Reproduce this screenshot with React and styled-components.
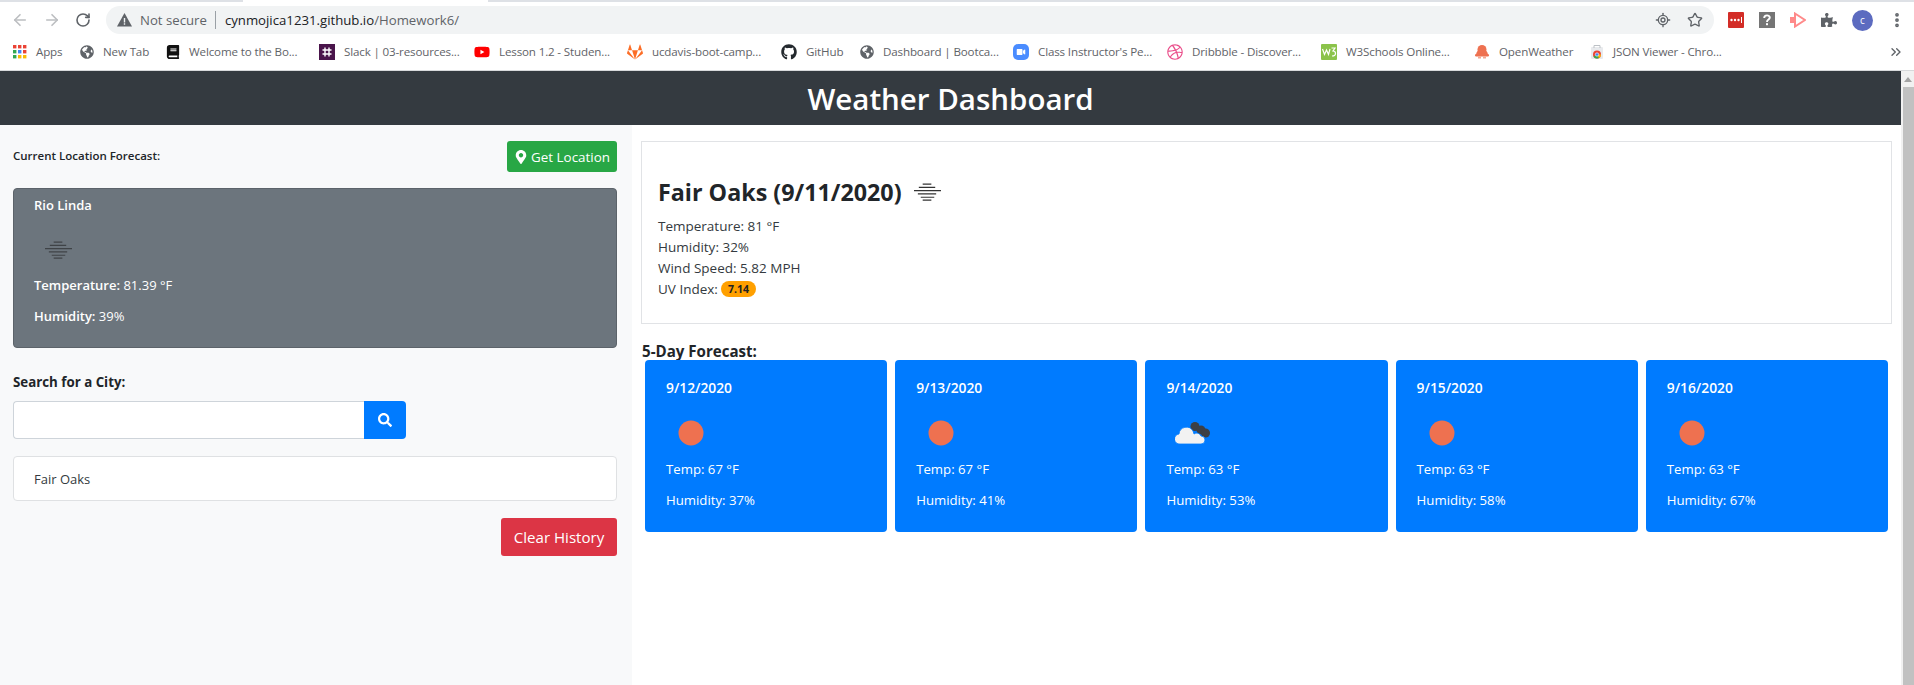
import React from "react";
import styled, { createGlobalStyle } from "styled-components";
import { FaMapMarkerAlt, FaSearch, FaGithub, FaGitlab, FaYoutube, FaGlobeAmericas, FaBook, FaDribbble, FaPuzzlePiece, FaVideo } from "react-icons/fa";
import { ArrowLeft, ArrowRight, RotateCw, Star, EllipsisVertical, ChevronsRight, LocateFixed } from "lucide-react";

const UI_FONT = `"Open Sans", "Noto Sans", sans-serif`;

const GlobalStyle = createGlobalStyle`
  html, body {
    margin: 0;
    height: 685px;
    overflow: hidden;
    background: #fff;
    font-family: ${UI_FONT};
    color: #212529;
  }
  * { box-sizing: border-box; }
`;

const Browser = styled.div`
  width: 1914px;
  height: 685px;
  display: flex;
  flex-direction: column;
  overflow: hidden;
`;

const TabEdge = styled.div`
  height: 2px;
  background: linear-gradient(to right, #dee1e6 243px, #fff 243px, #fff 488px, #dee1e6 488px);
`;

const Toolbar = styled.div`
  height: 32px;
  display: flex;
  align-items: flex-start;
  padding: 4px 0 0 11px;
`;

const NavIcon = styled.span`
  width: 32px;
  height: 28px;
  display: flex;
  align-items: center;
  justify-content: flex-start;
  color: ${(p) => (p.$off ? "#bcbec1" : "#5f6368")};
`;

const Omnibox = styled.div`
  width: 1608px;
  height: 28px;
  margin-left: -1px;
  border-radius: 14px;
  background: #f1f3f4;
  display: flex;
  align-items: center;
  padding: 0 11px 0 11px;
  font-size: 13.2px;
`;

const NotSecure = styled.span`
  display: flex;
  align-items: center;
  gap: 8px;
  color: #5f6368;
  padding-right: 8px;
  border-right: 1px solid #9aa0a6;
  line-height: 18px;
`;

const Url = styled.span`
  margin-left: 9px;
  color: #202124;
  flex: 1;
  i { font-style: normal; color: #5f6368; }
`;

const OmniIcons = styled.span`
  display: flex;
  align-items: center;
  gap: 16px;
  color: #5f6368;
`;

const Extensions = styled.div`
  display: flex;
  align-items: center;
  margin-left: 14px;
  height: 28px;
  gap: 15px;
  color: #5f6368;
`;

const Avatar = styled.span`
  width: 21px;
  height: 21px;
  border-radius: 50%;
  background: #5c6bc0;
  color: #fff;
  font-size: 10px;
  display: flex;
  align-items: center;
  justify-content: center;
`;

const Bookmarks = styled.div`
  height: 37px;
  display: flex;
  align-items: center;
  padding: 0 10px 1px 13px;
  border-bottom: 1px solid #d7d9db;
  font-size: 11.6px;
  letter-spacing: -0.15px;
  color: #5f6368;
`;

const Bookmark = styled.span`
  display: flex;
  align-items: center;
  gap: 9px;
  width: ${(p) => p.$w}px;
  flex: none;
  white-space: nowrap;
`;

const More = styled.span`
  margin-left: auto;
  display: flex;
  color: #5f6368;
`;

const Viewport = styled.div`
  flex: 1;
  display: flex;
  min-height: 0;
`;

const Page = styled.div`
  flex: 1;
  display: flex;
  flex-direction: column;
  min-width: 0;
`;

const Header = styled.header`
  height: 54px;
  flex: none;
  background: #343a40;
  color: #fff;
  font-size: 29.5px;
  font-weight: 600;
  display: flex;
  align-items: center;
  justify-content: center;
`;

const Columns = styled.div`
  flex: 1;
  display: flex;
  min-height: 0;
`;

const Sidebar = styled.aside`
  width: 632px;
  flex: none;
  background: #f8f9fa;
  padding: 16px 15px 0 13px;
  font-size: 13px;
`;

const LocationRow = styled.div`
  display: flex;
  align-items: center;
  justify-content: space-between;
  height: 31px;
`;

const SmallLabel = styled.span`
  font-size: 11.5px;
  font-weight: 600;
  margin-top: -2px;
`;

const Button = styled.button`
  border: 0;
  border-radius: 3px;
  color: #fff;
  font-family: inherit;
  font-size: ${(p) => p.$size || 13.4}px;
  background: ${(p) => p.$bg};
  display: flex;
  align-items: center;
  justify-content: center;
  gap: 3px;
  padding: 0;
  width: ${(p) => p.$w}px;
  height: ${(p) => p.$h}px;
`;

const RightAlign = styled.div`
  display: flex;
  justify-content: flex-end;
  margin-top: 17px;
`;

const CurrentCard = styled.section`
  height: 160px;
  margin-top: 16px;
  border: 1px solid #5c636a;
  border-radius: 4px;
  background: #6c757d;
  color: #fff;
  padding: 6px 20px;
  line-height: 20px;
`;

const CityName = styled.div`
  font-weight: 600;
`;

const CardIcon = styled.div`
  height: ${(p) => p.$h}px;
  margin-top: ${(p) => p.$top}px;
  padding-left: ${(p) => p.$left}px;
  display: flex;
  align-items: center;
`;

const StatLine = styled.div`
  margin-top: ${(p) => p.$gap ?? 11}px;
  b { font-weight: 600; }
`;

const SearchLabel = styled.div`
  margin-top: 25px;
  font-size: 13.3px;
  font-weight: 700;
  line-height: 18px;
`;

const SearchGroup = styled.div`
  display: flex;
  width: 393px;
  height: 38px;
  margin-top: 10px;
`;

const SearchInput = styled.input`
  flex: 1;
  min-width: 0;
  border: 1px solid #ced4da;
  border-right: 0;
  border-radius: 4px 0 0 4px;
  background: #fff;
`;

const SearchButton = styled.button`
  width: 42px;
  border: 0;
  border-radius: 0 4px 4px 0;
  background: #007bff;
  color: #fff;
  display: flex;
  align-items: center;
  justify-content: center;
  padding: 0;
`;

const HistoryItem = styled.div`
  height: 45px;
  margin-top: 17px;
  border: 1px solid #dfe1e3;
  border-radius: 4px;
  background: #fff;
  display: flex;
  align-items: center;
  padding-left: 20px;
  font-size: 13px;
  color: #343a40;
`;

const Main = styled.main`
  flex: 1;
  min-width: 0;
  padding: 16px 9px 0 9px;
`;

const TodayCard = styled.section`
  height: 183px;
  border: 1px solid #e1e3e6;
  padding: 34px 16px 0;
`;

const TodayTitle = styled.h2`
  margin: 0 0 8px;
  font-size: 23.3px;
  line-height: 32px;
  font-weight: 700;
  display: flex;
  align-items: center;
  gap: 12px;
`;

const TodayLine = styled.div`
  font-size: 13.5px;
  line-height: 21px;
  color: #343a40;
`;

const UvBadge = styled.span`
  display: inline-block;
  margin-left: 3px;
  padding: 0 7px;
  height: 16px;
  line-height: 16px;
  border-radius: 8px;
  background: #ffa000;
  color: #222;
  font-size: 10.5px;
  font-weight: 700;
  vertical-align: 1px;
`;

const ForecastTitle = styled.h3`
  margin: 19px 0 0 1px;
  height: 17px;
  font-size: 15.1px;
  line-height: 16px;
  font-weight: 700;
`;

const ForecastRow = styled.div`
  display: flex;
  gap: 8px;
  margin-left: 4px;
  width: 1243px;
`;

const ForecastCard = styled.article`
  flex: 1;
  height: 172px;
  border-radius: 4px;
  background: #007bff;
  color: #fff;
  padding: 18px 21px;
  font-size: 13.2px;
  line-height: 20px;
`;

const ForecastDate = styled.div`
  font-weight: 600;
  font-size: 13.8px;
`;

const Scrollbar = styled.div`
  width: 13px;
  flex: none;
  background: #f1f1f1;
  display: flex;
  flex-direction: column;
  align-items: flex-end;
`;

const ScrollArrow = styled.div`
  width: 0;
  height: 0;
  margin: 6px 2px 5px 0;
  border: 4px solid transparent;
  border-top: 0;
  border-bottom: 5px solid #a3a3a3;
`;

const ScrollThumb = styled.div`
  flex: 1;
  width: 11px;
  background: #c1c1c1;
`;

const MistIcon = ({ color = "#444" }) => (
  <svg width="27" height="18" viewBox="0 0 28 18" fill="none" stroke={color} strokeWidth="1.2">
    <path d="M9 .8h9M5 4.2h17M0 7.6h28M4 11h19M7 14.4h14M9 17.4h9" />
  </svg>
);

const Sun = () => (
  <svg width="26" height="26" viewBox="0 0 26 26"><circle cx="13" cy="13" r="12.5" fill="#ee7150" /></svg>
);

const BrokenCloud = () => (
  <svg width="35" height="22" viewBox="0 0 35 22">
    <circle cx="20" cy="4.5" r="4.5" fill="#3c3f45" />
    <circle cx="26" cy="8" r="4.5" fill="#3c3f45" />
    <circle cx="30.5" cy="11" r="4.5" fill="#3c3f45" />
    <path d="M5 22a5 5 0 0 1-1-10 7.5 7.5 0 0 1 14-3l1 3a4.5 4.5 0 0 1 7 2 4 4 0 0 1 0 8z" fill="#f2f2f2" stroke="#007bff" strokeWidth=".8" />
  </svg>
);

const AppsGrid = () => (
  <svg width="14" height="14" viewBox="0 0 14 14">
    {["#ea4335", "#ea4335", "#ea4335", "#34a853", "#4285f4", "#ea4335", "#34a853", "#fbbc04", "#fbbc04"].map((c, i) => (
      <rect key={i} x={(i % 3) * 5} y={Math.floor(i / 3) * 5} width="3.4" height="3.4" fill={c} />
    ))}
  </svg>
);

const WarnIcon = () => (
  <svg width="15" height="14" viewBox="0 0 15 14"><path d="M7.5 0 15 13.5H0z" fill="#5f6368" /><path d="M6.8 5h1.4v4.5H6.8zM6.8 10.3h1.4v1.5H6.8z" fill="#f1f3f4" /></svg>
);

const SlackTile = () => (
  <svg width="16" height="16" viewBox="0 0 16 16">
    <rect width="16" height="16" fill="#4a154b" />
    <path d="M6 3.5v9M10 3.5v9M3.5 6h9M3.5 10h9" stroke="#fff" strokeWidth="1.4" />
  </svg>
);

const W3Tile = () => (
  <svg width="16" height="16" viewBox="0 0 16 16">
    <rect width="16" height="16" rx="1" fill="#8bc34a" />
    <path d="M1.5 5 3.5 10.5 5.5 6l2 4.5L9 5M10.5 4h3.5l-2 3c2 0 2.5 1 2.5 2.5S13 12 11 12" fill="none" stroke="#fff" strokeWidth="1.2" />
  </svg>
);

const OwmIcon = () => (
  <svg width="16" height="16" viewBox="0 0 16 16">
    <path d="M2 11a6 6 0 0 1 12 0z" fill="#ee7150" />
    <circle cx="8" cy="5.5" r="4.5" fill="#ee7150" />
    <rect x="1" y="10" width="14" height="2.5" rx="1.2" fill="#ee7150" />
    <rect x="4" y="12.5" width="3" height="2" fill="#f3a892" />
    <rect x="9" y="12.5" width="3" height="2" fill="#f3a892" />
  </svg>
);

const StoreIcon = () => (
  <svg width="14" height="16" viewBox="0 0 14 16">
    <rect x="1" y="3" width="12" height="12" rx="1" fill="#e8eaed" />
    <path d="M4 4V1.5h6V4" fill="none" stroke="#bdc1c6" />
    <circle cx="7" cy="10.5" r="4" fill="#ea4335" />
    <path d="M7 10.5 3.5 12.5a4 4 0 0 0 5.5 1.5z" fill="#34a853" />
    <path d="M7 10.5 9 14a4 4 0 0 0 2-3.5z" fill="#fbbc04" />
    <circle cx="7" cy="10.5" r="1.7" fill="#4285f4" stroke="#fff" strokeWidth=".6" />
  </svg>
);

const ZoomIcon = () => (
  <svg width="16" height="16" viewBox="0 0 16 16">
    <rect width="16" height="16" rx="5" fill="#4a8cff" />
    <FaVideo x="3.5" y="3.5" size="9" color="#fff" />
  </svg>
);

const LastPass = () => (
  <svg width="16" height="16" viewBox="0 0 16 16">
    <rect width="16" height="16" rx="1" fill="#d32d27" />
    <circle cx="3.5" cy="8" r="1.2" fill="#fff" /><circle cx="7" cy="8" r="1.2" fill="#fff" /><circle cx="10.5" cy="8" r="1.2" fill="#fff" />
    <path d="M13.5 5v6" stroke="#fff" />
  </svg>
);

const HelpTile = () => (
  <svg width="16" height="16" viewBox="0 0 16 16">
    <rect width="16" height="16" fill="#757575" />
    <path d="M5.2 6c0-3.4 5.6-3.4 5.6-.4 0 2-2.8 2-2.8 4.4" fill="none" stroke="#fff" strokeWidth="1.9" />
    <rect x="7" y="11.2" width="2" height="2" fill="#fff" />
  </svg>
);

const PlayArrow = () => (
  <svg width="16" height="16" viewBox="0 0 16 16" fill="none">
    <path d="M5 1.5 15 8 5 14.5z" stroke="#ff8a8a" strokeWidth="2" />
    <rect x="0" y="5" width="6" height="6" fill="#ff8a8a" />
  </svg>
);

const bookmarks = [
  { icon: <AppsGrid />, label: "Apps", w: 67 },
  { icon: <FaGlobeAmericas size={14} color="#5f6368" />, label: "New Tab", w: 86 },
  { icon: <FaBook size={14} color="#111" />, label: "Welcome to the Bo...", w: 153 },
  { icon: <SlackTile />, label: "Slack | 03-resources...", w: 155 },
  { icon: <FaYoutube size={16} color="#f00" />, label: "Lesson 1.2 - Studen...", w: 153 },
  { icon: <FaGitlab size={16} color="#fc6d26" />, label: "ucdavis-boot-camp...", w: 154 },
  { icon: <FaGithub size={16} color="#24292e" />, label: "GitHub", w: 79 },
  { icon: <FaGlobeAmericas size={14} color="#5f6368" />, label: "Dashboard | Bootca...", w: 153 },
  { icon: <ZoomIcon />, label: "Class Instructor's Pe...", w: 154 },
  { icon: <FaDribbble size={16} color="#ea4c89" />, label: "Dribbble - Discover...", w: 154 },
  { icon: <W3Tile />, label: "W3Schools Online...", w: 153 },
  { icon: <OwmIcon />, label: "OpenWeather", w: 116 },
  { icon: <StoreIcon />, label: "JSON Viewer - Chro..." },
];

const forecast = [
  { date: "9/12/2020", temp: 67, humidity: 37 },
  { date: "9/13/2020", temp: 67, humidity: 41 },
  { date: "9/14/2020", temp: 63, humidity: 53, cloudy: true },
  { date: "9/15/2020", temp: 63, humidity: 58 },
  { date: "9/16/2020", temp: 63, humidity: 67 },
];

export default function App() {
  return (
    <Browser>
      <GlobalStyle />
      <TabEdge />
      <Toolbar>
        <NavIcon $off><ArrowLeft size={18} strokeWidth={2.2} /></NavIcon>
        <NavIcon $off><ArrowRight size={18} strokeWidth={2.2} /></NavIcon>
        <NavIcon><RotateCw size={16} strokeWidth={2.4} /></NavIcon>
        <Omnibox>
          <NotSecure><WarnIcon />Not secure</NotSecure>
          <Url>cynmojica1231.github.io<i>/Homework6/</i></Url>
          <OmniIcons>
            <LocateFixed size={16} />
            <Star size={16} />
          </OmniIcons>
        </Omnibox>
        <Extensions>
          <LastPass />
          <HelpTile />
          <PlayArrow />
          <FaPuzzlePiece size={16} />
          <Avatar>c</Avatar>
          <EllipsisVertical size={18} strokeWidth={3} />
        </Extensions>
      </Toolbar>
      <Bookmarks>
        {bookmarks.map((b) => (
          <Bookmark key={b.label} $w={b.w}>{b.icon}{b.label}</Bookmark>
        ))}
        <More><ChevronsRight size={16} /></More>
      </Bookmarks>
      <Viewport>
        <Page>
          <Header>Weather Dashboard</Header>
          <Columns>
            <Sidebar>
              <LocationRow>
                <SmallLabel>Current Location Forecast:</SmallLabel>
                <Button $bg="#28a745" $w={110} $h={31}><FaMapMarkerAlt size={14} />Get Location</Button>
              </LocationRow>
              <CurrentCard>
                <CityName>Rio Linda</CityName>
                <CardIcon $h={18} $top={26} $left={11}><MistIcon color="#3f4347" /></CardIcon>
                <StatLine $gap={16}><b>Temperature:</b> 81.39 °F</StatLine>
                <StatLine><b>Humidity:</b> 39%</StatLine>
              </CurrentCard>
              <SearchLabel>Search for a City:</SearchLabel>
              <SearchGroup>
                <SearchInput />
                <SearchButton><FaSearch size={14} /></SearchButton>
              </SearchGroup>
              <HistoryItem>Fair Oaks</HistoryItem>
              <RightAlign>
                <Button $bg="#dc3545" $w={116} $h={38} $size={15.1}>Clear History</Button>
              </RightAlign>
            </Sidebar>
            <Main>
              <TodayCard>
                <TodayTitle>Fair Oaks (9/11/2020) <MistIcon color="#333" /></TodayTitle>
                <TodayLine>Temperature: 81 °F</TodayLine>
                <TodayLine>Humidity: 32%</TodayLine>
                <TodayLine>Wind Speed: 5.82 MPH</TodayLine>
                <TodayLine>UV Index:<UvBadge>7.14</UvBadge></TodayLine>
              </TodayCard>
              <ForecastTitle>5-Day Forecast:</ForecastTitle>
              <ForecastRow>
                {forecast.map((f) => (
                  <ForecastCard key={f.date}>
                    <ForecastDate>{f.date}</ForecastDate>
                    <CardIcon $h={26} $top={22} $left={f.cloudy ? 9 : 12}>
                      {f.cloudy ? <BrokenCloud /> : <Sun />}
                    </CardIcon>
                    <StatLine $gap={13}>Temp: {f.temp} °F</StatLine>
                    <StatLine $gap={11}>Humidity: {f.humidity}%</StatLine>
                  </ForecastCard>
                ))}
              </ForecastRow>
            </Main>
          </Columns>
        </Page>
        <Scrollbar>
          <ScrollArrow />
          <ScrollThumb />
        </Scrollbar>
      </Viewport>
    </Browser>
  );
}
